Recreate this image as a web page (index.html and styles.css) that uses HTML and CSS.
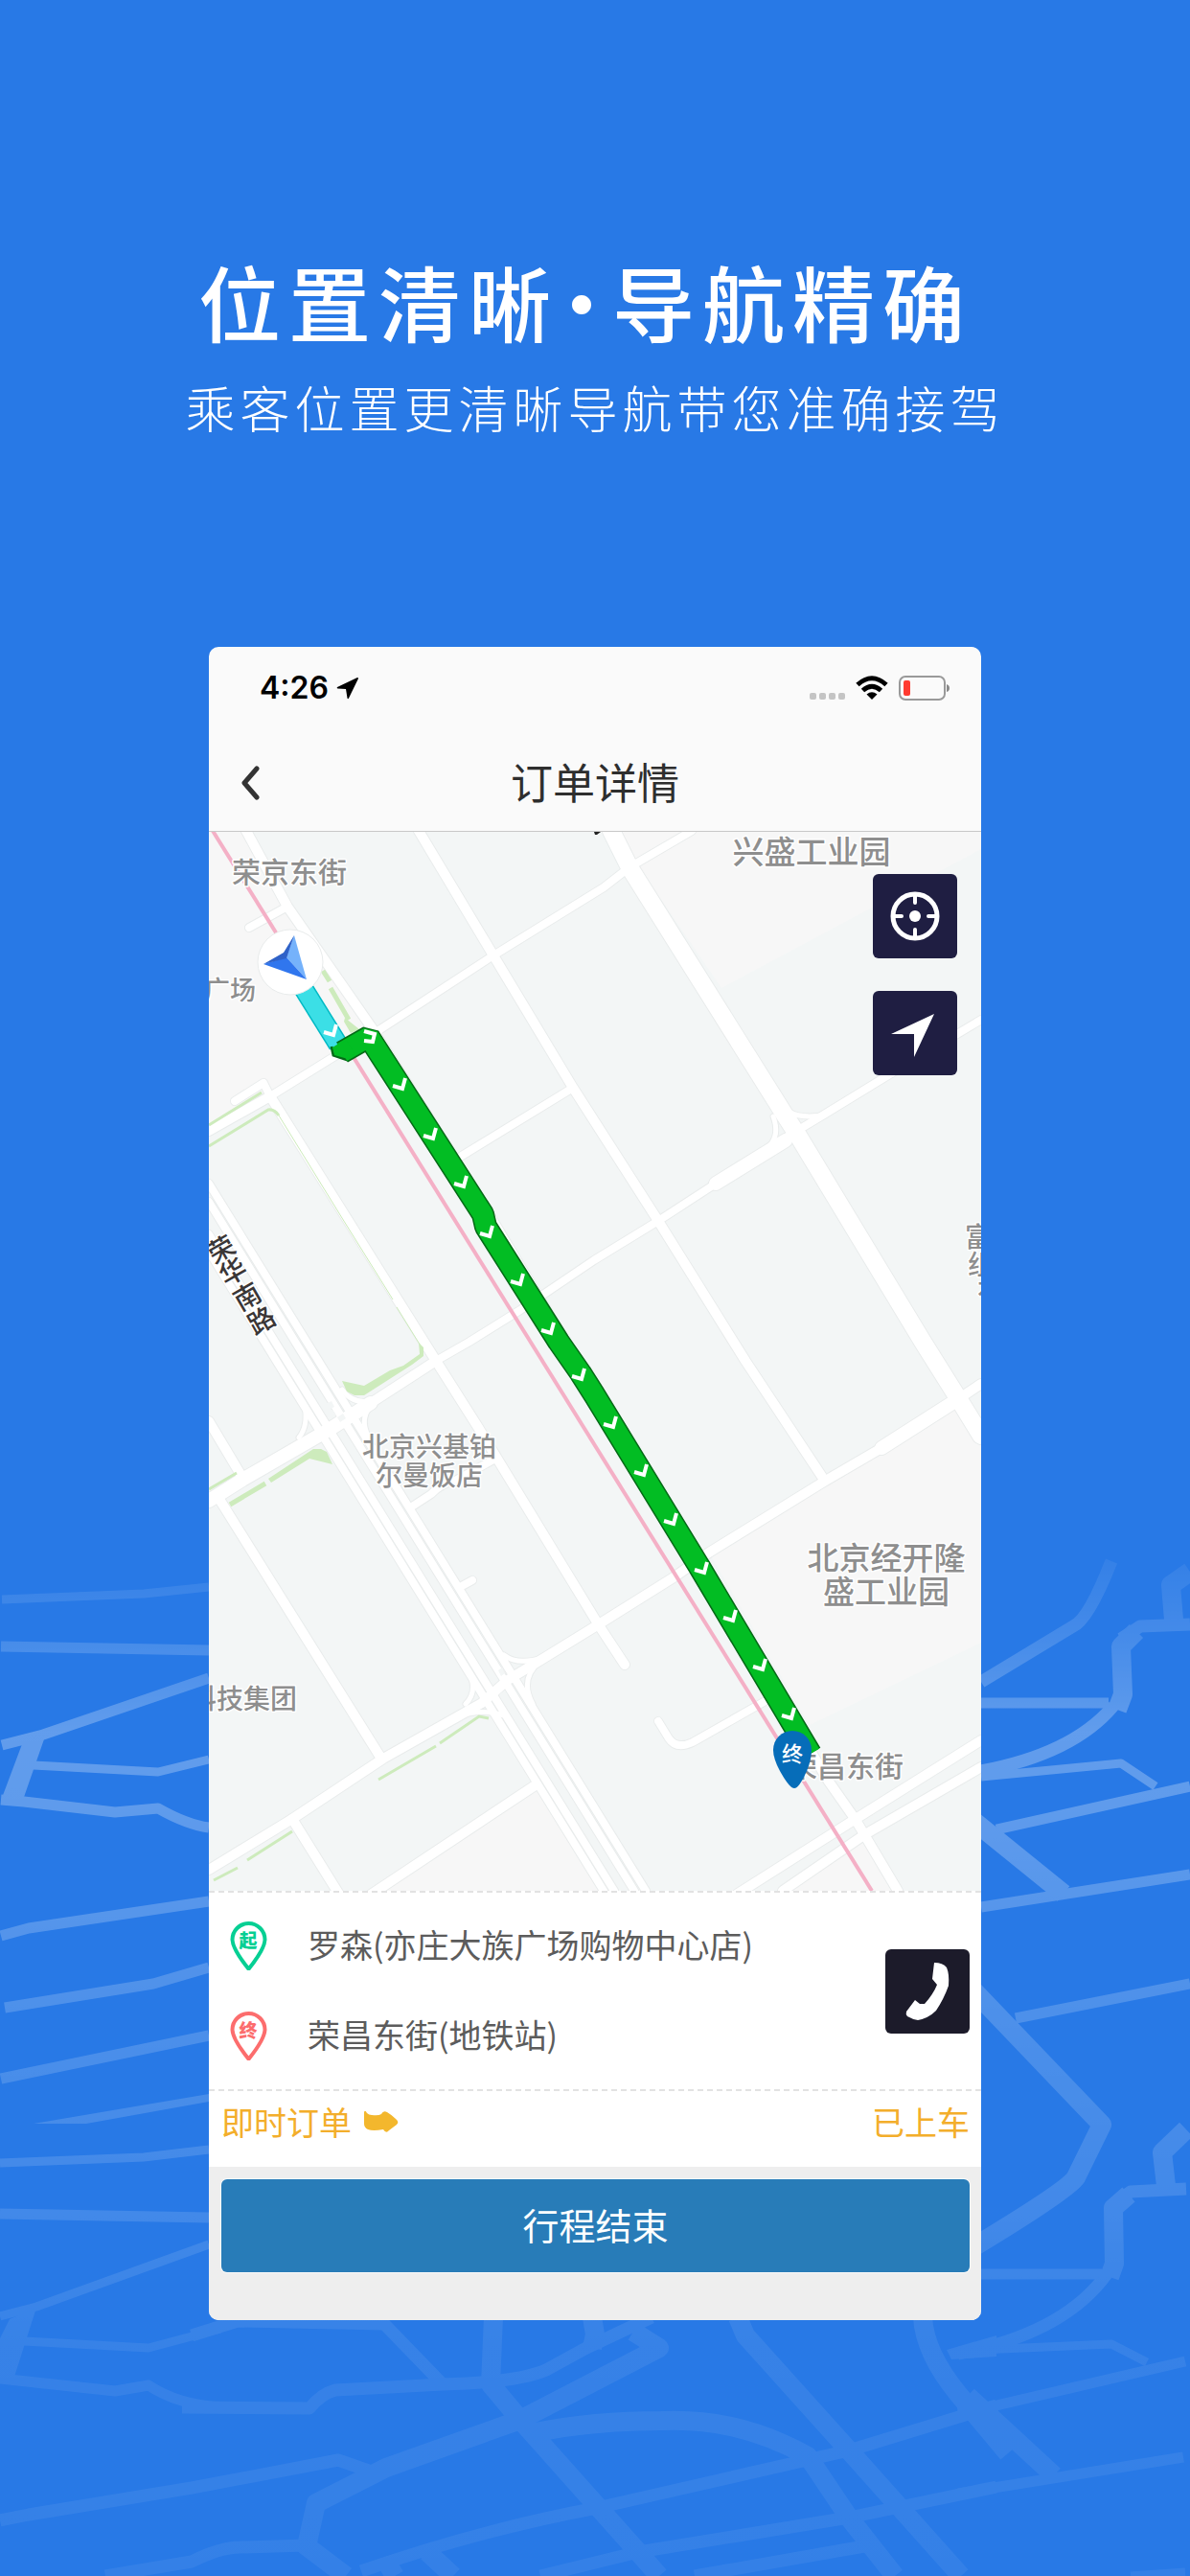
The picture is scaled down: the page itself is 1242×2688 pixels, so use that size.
FILE: index.html
```html
<!DOCTYPE html>
<html lang="zh-CN">
<head>
<meta charset="utf-8">
<meta name="viewport" content="width=device-width, initial-scale=1">
<title>位置清晰·导航精确</title>
<link rel="stylesheet" href="styles.css">
</head>
<body>
<svg class="backdrop" viewBox="0 1580 1242 1108" preserveAspectRatio="xMidYMax slice" aria-hidden="true">
  <defs>
    <linearGradient id="fade" gradientUnits="userSpaceOnUse" x1="0" y1="1600" x2="0" y2="2688">
      <stop offset="0" stop-color="#fff" stop-opacity="0.03"/>
      <stop offset="0.1" stop-color="#fff" stop-opacity="0.14"/>
      <stop offset="0.19" stop-color="#fff" stop-opacity="0.27"/>
      <stop offset="0.26" stop-color="#fff" stop-opacity="0.26"/>
      <stop offset="0.5" stop-color="#fff" stop-opacity="0.16"/>
      <stop offset="0.66" stop-color="#fff" stop-opacity="0.12"/>
      <stop offset="0.78" stop-color="#fff" stop-opacity="0.07"/>
      <stop offset="1" stop-color="#fff" stop-opacity="0.06"/>
    </linearGradient>
    <mask id="fadeMask" maskUnits="userSpaceOnUse" x="0" y="1580" width="1242" height="1108">
      <rect x="0" y="1580" width="1242" height="1108" fill="url(#fade)"/>
    </mask>
  </defs>
  <g class="streets" mask="url(#fadeMask)">
    <g class="s9">
      <path d="M2 1669L150 1663L218 1656"/>
      <path d="M35 1842L165 1849L218 1836"/>
      <path d="M0 2257L150 2251L218 2243"/>
      <path d="M0 2417L38 2407L218 2342"/>
      <path d="M25 2443L155 2450L230 2430"/>
      <path d="M1024 1854L1170 1840L1206 1864"/>
      <path d="M1000 2453L1160 2446L1197 2465"/>
      <path d="M1180 2688L1237 2684"/>
    </g>
    <g class="s11">
      <path d="M1 1718L218 1722"/>
      <path d="M2 1821L45 1810L218 1751"/>
      <path d="M1 1878L25 1880L120 1891L165 1887Q195 1904 218 1907"/>
      <path d="M1 2020L30 2012L218 1984"/>
      <path d="M5 2095L160 2070L218 2053"/>
      <path d="M1 2169L218 2124"/>
      <path d="M0 2310L218 2314"/>
      <path d="M0 2482L120 2495L155 2489Q185 2509 230 2512"/>
      <path d="M1024 1777L1157 1777"/>
      <path d="M1040 1909L1242 1864"/>
      <path d="M1024 1990L1242 1956"/>
      <path d="M1060 2106L1242 2070"/>
      <path d="M1024 2373L1150 2373"/>
      <path d="M1000 2518L1040 2510L1237 2464"/>
      <path d="M1000 2602L1235 2564"/>
    </g>
    <g class="s14">
      <path d="M0 2630L30 2624L200 2596L353 2567L393 2581"/>
      <path d="M110 2688L200 2673Q230 2658 250 2658L320 2656"/>
      <path d="M200 2437L248 2422L401 2425L462 2488"/>
      <path d="M190 2512L323 2513Q335 2498 350 2494L462 2488Q540 2486 570 2473L612 2450L680 2418"/>
      <path d="M377 2683Q500 2640 623 2617L886 2557L1040 2510"/>
      <path d="M564 2688L666 2663L886 2627L1040 2595"/>
      <path d="M725 2688L902 2657"/>
      <path d="M1024 1755L1120 1697Q1136 1690 1160 1629"/>
      <path d="M1024 1848Q1120 1830 1162 1780"/>
      <path d="M1170 1710L1190 1697L1242 1695"/>
      <path d="M1000 2456Q1110 2435 1155 2373"/>
      <path d="M1162 2300L1180 2287L1238 2284"/>
    </g>
    <g class="s20">
      <path d="M515 2418L512 2488L543 2525L666 2663L688 2688"/>
      <path d="M618 2418L621 2436L618 2450"/>
      <path d="M661 2433L688 2450L543 2525L403 2575L330 2612L320 2657L361 2688"/>
      <path d="M559 2538Q620 2526 690 2526Q770 2522 843 2563L886 2627L934 2688"/>
      <path d="M770 2418L778 2437L886 2557L1003 2688"/>
      <path d="M446 2663L473 2688M405 2676L412 2688"/>
      <path d="M963 2418Q965 2455 1000 2498L1052 2560"/>
      <path d="M1166 1784L1172 1768L1170 1718L1186 1702"/>
      <path d="M1225 1690L1222 1654L1242 1640"/>
      <path d="M1016 1900L1110 1976"/>
      <path d="M1014 2075L1150 2217L1123 2272Q1115 2285 1014 2346"/>
      <path d="M1158 2376L1163 2362L1162 2304L1178 2290"/>
      <path d="M1217 2281L1213 2246L1238 2222"/>
      <path d="M1010 2500L1100 2583"/>
    </g>
    <path class="block" d="M23 1820L47 1812L24 1878L2 1876ZM10 2420L38 2408L15 2480L0 2482V2440ZM35 2216L218 2185V2193L90 2216ZM988 2452L1040 2437V2459L993 2462Z"/>
  </g>
</svg>

<main class="page">
  <header class="intro">
    <h1>位置清晰<span class="dot">·</span>导航精确</h1>
    <p>乘客位置更清晰导航带您准确接驾</p>
  </header>

  <section class="phone">
    <div class="status">
      <span class="clock">4:26
        <svg width="23" height="24" viewBox="0 0 23 24" aria-hidden="true"><path d="M22 1L1 11Q0 12 1.500 12.500L10 13L11.500 22.500Q12 24 13 22.500L23 2Q23 1 22 1Z"/></svg>
      </span>
      <span class="signals">
        <svg width="37" height="26" viewBox="0 0 37 26" aria-hidden="true"><g fill="#c4c4c4"><rect y="18" width="7" height="7" rx="2"/><rect x="10" y="18" width="7" height="7" rx="2"/><rect x="20" y="18" width="7" height="7" rx="2"/><rect x="30" y="18" width="7" height="7" rx="2"/></g></svg>
        <svg width="34" height="26" viewBox="0 0 34 26" aria-hidden="true"><g fill="none" stroke="#000" stroke-width="5"><path d="M2 9.500Q17 -4 32 9.500"/><path d="M7.500 15.500Q17 7 26.500 15.500"/></g><path d="M17 25L11.500 19.500Q17 15 22.500 19.500Z"/></svg>
        <svg width="54" height="26" viewBox="0 0 54 26" aria-hidden="true"><rect x="1" y="1" width="47" height="24" rx="6" fill="none" stroke="#999" stroke-width="2"/><rect x="5" y="5" width="7" height="16" rx="2" fill="#ff3b30"/><path d="M50 9Q53 10 53 13Q53 16 50 17Z" fill="#888"/></svg>
      </span>
    </div>

    <div class="navbar">
      <button class="back" type="button" aria-label="返回"><svg width="20" height="36" viewBox="0 0 20 36" aria-hidden="true"><path d="M17 3L4 18L17 33" fill="none" stroke="#333" stroke-width="5" stroke-linecap="round" stroke-linejoin="round"/></svg></button>
      <h2>订单详情</h2>
    </div>

    <div class="map">
      <svg class="map-canvas" viewBox="218 868 806 1105" role="img" aria-label="导航路线">
        <defs>
          <g id="roads">
            <g class="w8">
              <path d="M276 1400L218 1306M276 1400L630 1973M320 1400L218 1235M320 1400L674 1973"/>
              <path d="M287 1400L218 1288M287 1400L641 1973M308 1400L218 1254M308 1400L662 1973"/>
              <path d="M260 968L300 946M245 1149L275 1130L282 1144"/>
              <path d="M282 1144L348 1103L397 1074L515 997L630 926L657 905L722 867"/>
              <path d="M482 1206L598 1135"/>
              <path d="M455 1420L490 1400L543 1367L620 1315L687 1274L747 1235"/>
              <path d="M820 1187L860 1163L927 1122L1024 1064"/>
              <path d="M430 1572L450 1559Q460 1548 475 1545L517 1522M482 1655L493 1649"/>
              <path d="M687 1796L698 1814Q706 1826 723 1818L797 1776"/>
            </g>
            <g class="w10">
              <path d="M257 867L300 946L387 1071L500 1250L865 1859L893 1899L937 1973"/>
              <path d="M437 867L515 997L598 1135L687 1274L778 1420L860 1544"/>
              <path d="M282 1144L455 1420L500 1491L625 1696L652 1737"/>
              <path d="M218 1180L282 1144M218 1483L252 1540M230 1566L398 1835"/>
              <path d="M387 1464L455 1420"/>
              <path d="M1024 1444L1000 1460M920 1511L860 1546L740 1620L703 1646L620 1698L563 1733L530 1753L503 1777L400 1835L305 1898L218 1951"/>
              <path d="M305 1898L356 1980M387 1977L560 1862"/>
              <path d="M770 1976L893 1898L1024 1816M817 1973L903 1914L1024 1844"/>
            </g>
            <g class="w14">
              <path d="M218 1566L253 1544L343 1492L387 1464M747 1235L820 1190M920 1511L1000 1460"/>
            </g>
            <g class="w18">
              <path d="M638 867L657 905L820 1165L833 1185L963 1400L1000 1459L1024 1498"/>
            </g>
            <g class="w5">
              <path d="M318 1466Q322 1488 312 1500M357 1450Q368 1466 390 1462M391 1463Q374 1478 384 1498"/>
              <path d="M488 1742Q500 1764 486 1778M526 1727Q540 1738 566 1730M563 1734Q542 1752 556 1778M477 1792Q500 1782 526 1790"/>
              <path d="M807 1165Q814 1184 803 1196M823 1160Q838 1168 862 1163"/>
            </g>
          </g>
        </defs>
        <rect x="218" y="868" width="806" height="1105" fill="#f3f6f6"/>
        <path fill="#f7f7f7" d="M218 868H257L387 1071L282 1144L218 1180ZM642 868H1024V886L753 1031ZM1000 1461L1024 1498V1714L845 1800L740 1620ZM387 1973L560 1862L630 1973ZM817 1973L903 1914L937 1973Z"/>
        <g class="casing"><use href="#roads"/></g>
        <g class="surface"><use href="#roads"/></g>
        <path fill="#f3f6f6" d="M340 1465L346 1462L349 1468L343 1471ZM352 1479L358 1475L361 1480L355 1484ZM341 1474L347 1471L351 1477L345 1481ZM520 1743L524 1740L527 1746L523 1749ZM521 1768L527 1764L530 1769L525 1772Z"/>
        <g fill="none" stroke="#cdebbc">
          <path stroke-width="3" d="M218 1174L273 1140M218 1196L280 1158Q286 1157 291 1164M218 1554L247 1537M395 1857L455 1822M459 1819L500 1791L510 1793M258 1941L305 1911M223 1962L248 1949"/>
          <path stroke-width="1" d="M291 1164L357 1271L410 1356M414 1364L440 1406"/>
          <path stroke-width="5" d="M337 1013L344 1024M345 1031L364 1064M240 1570L277 1548"/>
        </g>
        <path fill="#cdebbc" d="M360 1062L375 1074L366 1078L359 1066ZM357 1441L380 1446L407 1430L421 1425L438 1413L437 1401L442 1406V1415L430 1424L380 1456H370L362 1452ZM280 1543L327 1512H335L341 1515L347 1528L323 1522L283 1547Z"/>
        <path d="M222 867L910 1973" stroke="#f4b0c6" stroke-width="4"/>
        <path d="M620 868H627L623 871H621Z" fill="#222"/>

        <g class="labels">
          <text x="242" y="921" font-size="30">荣京东街</text>
          <text x="213" y="1043" font-size="27">广场</text>
          <text x="847" y="901" font-size="33" text-anchor="middle">兴盛工业园</text>
          <text x="448" y="1520" font-size="28" text-anchor="middle">北京兴基铂</text>
          <text x="448" y="1550" font-size="28" text-anchor="middle">尔曼饭店</text>
          <text x="925" y="1638" font-size="33" text-anchor="middle">北京经开隆</text>
          <text x="925" y="1673" font-size="33" text-anchor="middle">盛工业园</text>
          <text x="198" y="1783" font-size="28">科技集团</text>
          <text x="823" y="1854" font-size="30">荣昌东街</text>
          <text x="1007" y="1301" font-size="28">富</text>
          <text x="1010" y="1330" font-size="28">组</text>
          <text x="1020" y="1359" font-size="28">有</text>
          <g class="road-name" font-size="28" text-anchor="middle">
            <text transform="translate(231 1304) rotate(-30)" y="10">荣</text>
            <text transform="translate(243 1327) rotate(-30)" y="10">华</text>
            <text transform="translate(258 1353) rotate(-30)" y="10">南</text>
            <text transform="translate(273 1378) rotate(-30)" y="10">路</text>
          </g>
        </g>

        <g fill="none">
          <path d="M312 1024L353 1090" stroke="#00b9c4" stroke-width="21"/>
          <path d="M312 1024L353 1090" stroke="#3bdfe6" stroke-width="18"/>
          <path d="M357 1098L385 1082L504 1267L507 1280L583 1400L606 1433L620 1455L730 1635L846 1830" stroke="#046a16" stroke-width="24" stroke-linejoin="bevel"/>
          <path d="M346 1092L348 1101L363 1106L372 1101" stroke="#046a16" stroke-width="3"/>
          <path d="M357 1098L385 1082L504 1267L507 1280L583 1400L606 1433L620 1455L730 1635L846 1830" stroke="#02bd23" stroke-width="21" stroke-linejoin="bevel"/>
        </g>
        <path d="M355 1088L347 1093L349 1101L363 1105L370 1100L362 1086Z" fill="#02bd23"/>
        <g class="chevrons">
          <path d="M338 1077l10 3l3 -11"/>
          <path d="M380 1076l11 3l-2 8l-9 -1"/>
          <path d="M410 1133l10 3l3 -11M442 1185l10 3l3 -11M474 1235l10 3l3 -11M501 1287l10 3l3 -11M533 1337l10 3l3 -11M565 1388l10 3l3 -11M597 1436l10 3l3 -11M630 1486l10 3l3 -11M662 1536l10 3l3 -11M693 1587l10 3l3 -11M725 1638l10 3l3 -11M755 1688l10 3l3 -11M786 1739l10 3l3 -11M816 1790l10 3l3 -11"/>
        </g>

        <circle cx="303" cy="1004" r="34" fill="#fff" stroke="#e9ecec"/>
        <path d="M307 976L320 1022L299 999Z" fill="#75b2fb"/>
        <path d="M275 1006L299 999L320 1022Z" fill="#3076ee"/>
        <path d="M307 976L299 1000L275 1006L296 994Z" fill="#2f62c8"/>

        <path d="M829 1866Q824 1866 814 1848Q807 1835 807 1826A20 20 0 0 1 847 1826Q847 1836 842 1848Q834 1866 829 1866Z" fill="#066db9"/>
        <text class="pin-text" x="827" y="1838" font-size="22" text-anchor="middle">终</text>
      </svg>

      <div class="map-tools">
        <button type="button" aria-label="定位"><svg width="52" height="52" viewBox="0 0 52 52" aria-hidden="true"><circle cx="26" cy="26" r="23" fill="none" stroke="#fff" stroke-width="5"/><circle cx="26" cy="26" r="6" fill="#fff"/><path d="M26 3V12M26 40V49M3 26H12M40 26H49" stroke="#fff" stroke-width="4" stroke-linecap="round"/></svg></button>
        <button type="button" aria-label="导航"><svg width="52" height="52" viewBox="0 0 52 52" aria-hidden="true"><path d="M1 27L46 6L25 51V27Z" fill="#fff"/></svg></button>
      </div>
    </div>

    <div class="trip">
      <ul class="places">
        <li><svg class="start" width="39" height="52" viewBox="0 0 39 52" aria-hidden="true"><path d="M19 49Q3 29 2.500 19A17 17 0 0 1 36.500 19Q36 29 20 49Z" fill="#fff" stroke="currentColor" stroke-width="4"/><text x="19" y="27" font-size="19" text-anchor="middle">起</text></svg><span>罗森(亦庄大族广场购物中心店)</span></li>
        <li><svg class="end" width="39" height="52" viewBox="0 0 39 52" aria-hidden="true"><path d="M19 49Q3 29 2.500 19A17 17 0 0 1 36.500 19Q36 29 20 49Z" fill="#fff" stroke="currentColor" stroke-width="4"/><text x="19" y="27" font-size="19" text-anchor="middle">终</text></svg><span>荣昌东街(地铁站)</span></li>
      </ul>
      <button class="call" type="button" aria-label="拨打电话"><svg width="88" height="88" viewBox="0 0 88 88" aria-hidden="true"><path d="M51 14Q60 14 64 19Q67 26 66 38Q61 52 53 64Q45 72 34 74Q28 73 23 70Q21 68 22 65L31 53L36 57L41 57Q50 47 54 37L49 31Z" fill="#fff"/></svg></button>
    </div>

    <div class="order">
      <span class="kind">即时订单
        <svg width="36" height="24" viewBox="0 0 36 24" aria-hidden="true"><path d="M0 2Q1 -1 3 3Q5 5 8 5Q15 6 18 4Q20 0 24 2Q29 5 33 9Q37 12 34 15L26 21Q23 25 20 20Q9 22 4 20Q0 18 0 14Z" fill="#f3b72d"/></svg>
      </span>
      <span class="state">已上车</span>
    </div>

    <div class="actions">
      <button class="finish" type="button">行程结束</button>
    </div>
  </section>
</main>
</body>
</html>
```
FILE: styles.css
```css
* {
  box-sizing: border-box;
}

body {
  margin: 0;
  min-height: 100vh;
  position: relative;
  background: #2879e6;
  font-family: "Noto Sans CJK SC", sans-serif;
}

button {
  border: 0;
  padding: 0;
  font: inherit;
  color: #fff;
}

svg {
  display: block;
  flex: none;
}

h1,
h2,
p,
ul {
  margin: 0;
  padding: 0;
}

/* faded street pattern behind the lower half */
.backdrop {
  position: absolute;
  left: 0;
  bottom: 0;
  width: 100%;
}

.streets {
  fill: none;
  stroke: #fff;
  stroke-linejoin: round;
}

.s9 { stroke-width: 9; }
.s11 { stroke-width: 11; }
.s14 { stroke-width: 13; }
.s20 { stroke-width: 20; }

.block {
  fill: #fff;
  stroke: none;
}

.page {
  position: relative;
  display: flex;
  flex-direction: column;
  align-items: center;
  padding: 264px 0;
}

.intro {
  color: #fff;
  text-align: center;
}

.intro h1 {
  padding-right: 20px;
  font-size: 86px;
  line-height: 100px;
  font-weight: 500;
  letter-spacing: 8px;
}

/* the full-width dot sits closer to its neighbours */
.dot {
  margin: 0 -19px;
}

.intro p {
  margin-top: 31px;
  font-size: 52px;
  line-height: 60px;
  font-weight: 300;
  letter-spacing: 5px;
}

.phone {
  width: 65%;
  max-width: 806px;
  margin-top: 220px;
  border-radius: 10px;
  overflow: hidden;
  background: #fafafa;
}

.status {
  display: flex;
  justify-content: space-between;
  align-items: center;
  padding: 28px 32px 34px 53px;
  line-height: 30px;
}

.clock {
  display: flex;
  align-items: center;
  gap: 8px;
  font-family: Inter, sans-serif;
  font-size: 32px;
  font-weight: 600;
}

.signals {
  display: flex;
  align-items: center;
  gap: 11px;
}

.navbar {
  display: grid;
  grid-template-columns: 88px 1fr 88px;
  align-items: center;
  height: 101px;
  border-bottom: 1px solid #c8c8c8;
}

.back {
  padding: 0 0 0 33px;
  background: none;
}

.navbar h2 {
  padding-bottom: 4px;
  font-size: 44px;
  line-height: 60px;
  font-weight: 400;
  text-align: center;
  color: #2e2e2e;
}

.map {
  position: relative;
}

.map-canvas {
  width: 100%;
}

.w5 { --w: 5px; }
.w8 { --w: 8px; }
.w10 { --w: 10px; }
.w14 { --w: 14px; }
.w18 { --w: 18px; }

#roads path {
  fill: none;
  stroke-width: calc(var(--w) + var(--edge));
  stroke-linecap: round;
  stroke-linejoin: round;
}

.casing {
  --edge: 2px;
  stroke: #e9ecec;
}

.surface {
  --edge: 0px;
  stroke: #fff;
}

.labels {
  fill: #8e8e8e;
  stroke: #fff;
  stroke-width: 3px;
  stroke-linejoin: round;
  paint-order: stroke;
  font-weight: 500;
}

.road-name {
  fill: #3a3636;
}

.chevrons {
  fill: none;
  stroke: #fff;
  stroke-width: 4px;
}

.pin-text {
  fill: #fff;
  font-weight: 500;
}

.map-tools {
  position: absolute;
  top: 44px;
  right: 25px;
  display: flex;
  flex-direction: column;
  gap: 34px;
}

.map-tools button {
  display: grid;
  place-items: center;
  width: 88px;
  height: 88px;
  border-radius: 6px;
  background: #1f1e42;
}

.trip {
  display: flex;
  justify-content: space-between;
  align-items: center;
  padding: 9px 12px 8px 22px;
  border-top: 2px dashed #e2e2e2;
  border-bottom: 2px dashed #e2e2e2;
  background: #fff;
}

.places {
  list-style: none;
}

.places li {
  display: flex;
  align-items: center;
  gap: 42px;
  min-height: 94px;
  font-size: 34px;
  line-height: 48px;
  color: #5c5c5c;
}

.places span {
  padding-bottom: 4px;
}

.places text {
  fill: currentColor;
  font-weight: 900;
}

.start { color: #06cf93; }
.end { color: #fc6d6d; }

.call {
  border-radius: 6px;
  background: #1c1b2a;
}

.order {
  display: flex;
  justify-content: space-between;
  padding: 8px 12px 23px 13px;
  background: #fff;
  font-size: 34px;
  line-height: 48px;
  color: #f3ae2b;
}

.kind {
  display: flex;
  align-items: center;
  gap: 13px;
}

.actions {
  padding: 13px 12px 50px 13px;
  background: #eee;
}

.finish {
  display: block;
  width: 100%;
  padding: 18px 20px 22px;
  border-radius: 6px;
  background: #287cb8;
  box-shadow: 0 0 0 1px #fafafa;
  font-size: 38px;
  line-height: 57px;
}
```
